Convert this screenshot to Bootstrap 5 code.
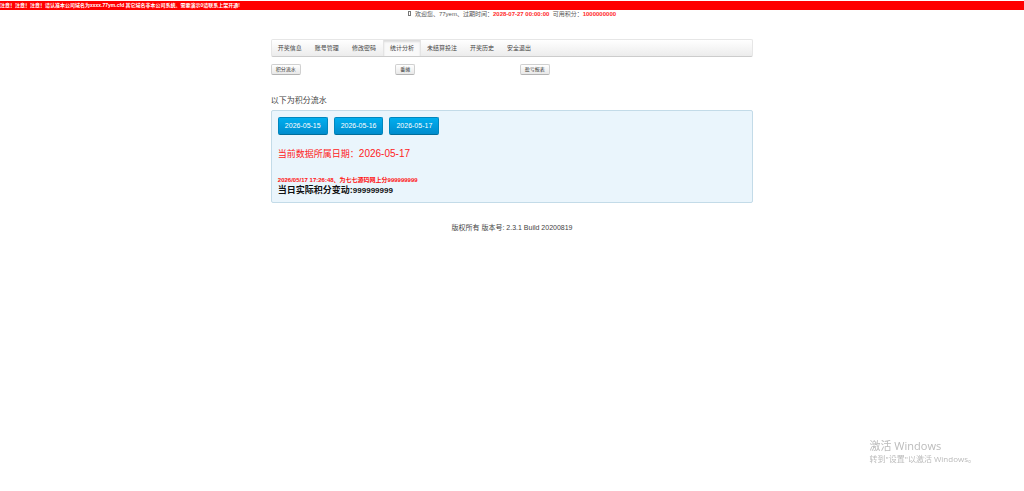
<!DOCTYPE html>
<html lang="zh-CN">
<head>
<meta charset="utf-8">
<meta name="viewport" content="width=device-width, initial-scale=1">
<title>统计分析</title>
<link href="https://cdn.jsdelivr.net/npm/bootstrap@5.3.0/dist/css/bootstrap.min.css" rel="stylesheet">
<style>
body{font-family:"Liberation Sans","Noto Sans CJK SC",sans-serif;font-size:7px;line-height:10px;color:#444;background:#fff}
.notice{background:#f00;color:#fff;font-size:5px;line-height:8px;margin-top:1px;height:9px}
.welcome{font-size:6px;line-height:8px;color:#555}
.welcome b{color:#ff2a2a}
.glyph-box{width:3px;height:5px;border:1px solid #777;box-sizing:content-box;width:1px;height:3px;margin-right:4px}
.page{width:47.1%}
.menu-bar{margin-top:21px;border:1px solid #e6e6e6;border-bottom-color:#ccc;border-radius:2px;background:linear-gradient(#fff,#ececec)}
.menu-bar .nav-link{font-size:6px;line-height:16px;padding:0 7px 0 6px;color:#444}
.menu-bar .nav-link.active{background:#f9f9f9;box-shadow:inset 0 2px 2px #ddd;border-left:1px solid #e4e4e4;border-right:1px solid #e4e4e4;padding:0 6px}
.tool-row{margin-top:7px}
.tool-row .btn{font-size:5px;line-height:9px;padding:0 4px;color:#333;border:1px solid #d0d0d0;border-bottom-color:#b3b3b3;border-radius:2px;background:linear-gradient(#fff,#e8e8e8)}
.tool-col{width:25.8%}
.heading{font-size:8px;line-height:12px;margin-top:20px}
.panel{margin-top:3px;padding:6px 6px 5px;background:#eaf5fc;border:1px solid #c3dbe8;border-radius:2px}
.dates{gap:6px}
.panel .btn{font-size:7px;line-height:16px;padding:0 6px;color:#fff;border:1px solid #0087be;border-bottom-color:#006e9b;border-radius:2px;background:linear-gradient(#00aeef,#008ccd)}
.current{font-size:9px;line-height:14px;color:#f22;margin-top:12px}
.current time{font-size:10px}
.record{font-size:6px;line-height:8px;color:#f11;margin-top:15px}
.total{font-size:9px;line-height:13px;color:#111}
.total span{font-size:8px}
.copyright{font-size:7px;line-height:10px;margin-top:20px}
.activate{right:48px;bottom:26px;font-family:"Open Sans","Noto Sans CJK SC",sans-serif;color:#bbb;font-size:8px;line-height:12px}
.activate strong{font-size:11px;line-height:14px}
</style>
<script src="https://cdn.jsdelivr.net/npm/bootstrap@5.3.0/dist/js/bootstrap.bundle.min.js"></script>
</head>
<body>
<div class="notice fw-bold text-nowrap">注意！注意！注意！请认准本公司域名为xxxx.77ym.cfd 其它域名非本公司系统。需要演示0请联系上架开通!</div>
<header class="welcome text-center"><span class="glyph-box d-inline-block"></span>欢迎您、77yem、过期时间：<b>2028-07-27 00:00:00</b>&nbsp; 可用积分：<b>1000000000</b></header>
<div class="page mx-auto">
<nav class="menu-bar">
<div class="nav">
<a class="nav-link" href="#">开奖信息</a>
<a class="nav-link" href="#">账号管理</a>
<a class="nav-link" href="#">修改密码</a>
<a class="nav-link active" href="#">统计分析</a>
<a class="nav-link" href="#">未结算投注</a>
<a class="nav-link" href="#">开奖历史</a>
<a class="nav-link" href="#">安全退出</a>
</div>
</nav>
<div class="tool-row d-flex">
<div class="tool-col d-flex"><button class="btn" type="button">积分流水</button></div>
<div class="tool-col d-flex"><button class="btn" type="button">番摊</button></div>
<div class="tool-col d-flex"><button class="btn" type="button">盈亏报表</button></div>
</div>
<main>
<h1 class="heading fw-normal mb-0">以下为积分流水</h1>
<section class="panel">
<div class="d-flex dates">
<button class="btn" type="button">2026-05-15</button>
<button class="btn" type="button">2026-05-16</button>
<button class="btn" type="button">2026-05-17</button>
</div>
<div class="current">当前数据所属日期：<time>2026-05-17</time></div>
<div class="record fw-bold">2026/05/17 17:26:48、为七七源码网上分999999999</div>
<div class="total fw-bold">当日实际积分变动:<span>999999999</span></div>
</section>
</main>
<footer class="copyright text-center">版权所有 版本号: 2.3.1 Build 20200819</footer>
</div>
<aside class="activate position-fixed"><strong class="d-block fw-normal">激活 Windows</strong>转到"设置"以激活 Windows。</aside>
</body>
</html>
